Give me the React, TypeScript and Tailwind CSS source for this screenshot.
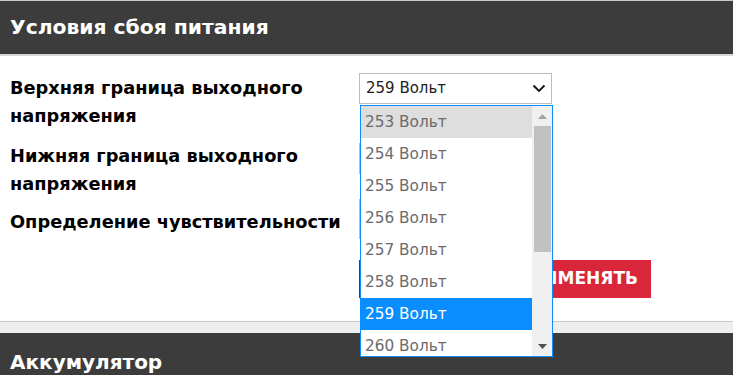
import React from "react";

const options = [253, 254, 255, 256, 257, 258, 259, 260];

function Chevron() {
  return (
    <svg width="14" height="9" viewBox="0 0 14 9" className="shrink-0">
      <path d="M1.5 1.5 L7 7 L12.5 1.5" fill="none" stroke="#111" strokeWidth="1.8" />
    </svg>
  );
}

function Label({ children }: { children: React.ReactNode }) {
  return <div className="w-[349px] text-[17.8px] font-bold leading-[28px] text-black">{children}</div>;
}

function SelectBox({ value, className }: { value?: string; className?: string }) {
  return (
    <div className={`flex h-[31px] w-[193px] items-center justify-between border border-[#bdbdbd] bg-white pl-[6px] pr-[5px] text-[15px] text-[#222] ${className ?? ""}`}>
      {value ? <span>{value}</span> : <span />}
      <Chevron />
    </div>
  );
}

function Dropdown() {
  return (
    <div className="absolute left-[360px] top-[105px] flex h-[252px] w-[193px] overflow-hidden border border-[#0a8dff] bg-white">
      <div className="flex-1">
        {options.map((v) => (
          <div
            key={v}
            className={`flex h-[32px] items-center pl-[4px] text-[15.3px] ${
              v === 259 ? "bg-[#0a8dff] text-white" : v === 253 ? "bg-[#dedede] text-[#6b6b6b]" : "text-[#6b6b6b]"
            }`}
          >
            {v} Вольт
          </div>
        ))}
      </div>
      <div className="flex w-[20px] flex-col items-center bg-[#f0f0f0]">
        <div className="flex h-[20px] w-full items-center justify-center">
          <svg width="9" height="5" viewBox="0 0 9 5"><path d="M0 5 L4.5 0 L9 5 Z" fill="#a3a3a3" /></svg>
        </div>
        <div className="h-[126px] w-[17px] bg-[#c1c1c1]" />
        <div className="flex-1" />
        <div className="flex h-[20px] w-full items-center justify-center">
          <svg width="9" height="5" viewBox="0 0 9 5"><path d="M0 0 L4.5 5 L9 0 Z" fill="#505050" /></svg>
        </div>
      </div>
    </div>
  );
}

export default function App() {
  return (
    <div
      className="relative h-[375px] w-[733px] overflow-hidden bg-white"
      style={{ fontFamily: '"DejaVu Sans", "Liberation Sans", sans-serif' }}
    >
      {/* section header */}
      <div className="border-t border-[#c8c8c8]">
        <div className="flex h-[53px] items-center bg-[#3c3c3c] px-[10px] text-[20.3px] font-bold text-white">
          Условия сбоя питания
        </div>
        <div className="h-[2px] bg-[#d6d6d6]" />
      </div>

      {/* settings */}
      <div className="flex h-[265px] flex-col px-[10px] pt-[18px]">
        <div className="flex">
          <Label>
            Верхняя граница выходного
            <br />
            напряжения
          </Label>
          <SelectBox value="259 Вольт" className="-mt-[1px]" />
        </div>
        <div className="mt-[12px] flex">
          <Label>
            Нижняя граница выходного
            <br />
            напряжения
          </Label>
          <SelectBox className="mt-[1px]" />
        </div>
        <div className="mt-[10px] flex">
          <Label>Определение чувствительности</Label>
          <SelectBox className="-mt-[9px] h-[40px]" />
        </div>
        <div className="ml-[349px] mt-[21px] flex h-[38px] gap-[8px]">
          <div className="w-[130px] bg-[#3c3c3c]" />
          <div className="flex w-[154px] items-center justify-end bg-[#d9263a] pr-[13px] text-[17px] font-bold text-white">
            ПРИМЕНЯТЬ
          </div>
        </div>
      </div>

      {/* next section */}
      <div className="h-[12px] border-t border-[#c8c8c8] bg-[#eeeeee]" />
      <div className="flex h-[60px] items-start bg-[#3c3c3c] px-[10px] pt-[14px] text-[20px] font-bold text-white">
        Аккумулятор
      </div>

      <Dropdown />
    </div>
  );
}
